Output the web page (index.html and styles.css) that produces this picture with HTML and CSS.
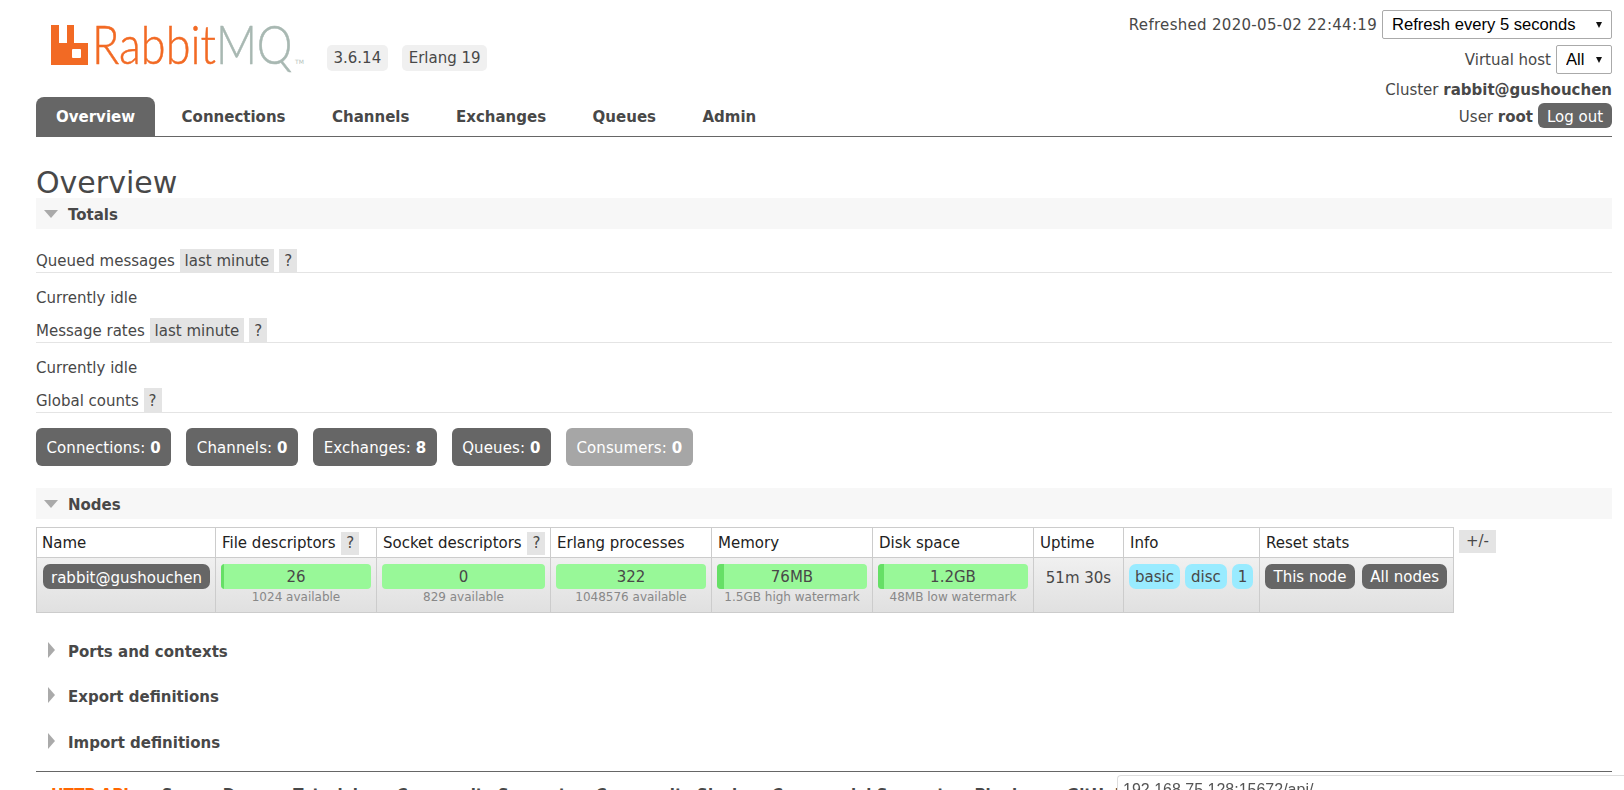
FILE: index.html
```html
<!DOCTYPE html>
<html lang="en">
<head>
    <meta charset="UTF-8">
    <meta name="viewport" content="width=device-width, initial-scale=1.0">
    <title>RabbitMQ Management</title>
    <link rel="stylesheet" href="styles.css">
</head>
<body>
    <div class="header">
        <div class="brand">
            <div class="logo">
                <svg class="logo-icon" width="37" height="40" viewBox="0 0 37 40">
                    <path fill-rule="evenodd" d="M0 0H8V18H16V0H23V18H37V40H0ZM22 24Q21 24 21 25V32Q21 33 22 33H29Q30 33 30 32V25Q30 24 29 24Z"/>
                </svg>
                <span class="logo-word"><span class="logo-rabbit">Rabbit</span><span class="logo-mq">MQ</span></span>
                <span class="logo-tm">TM</span>
            </div>
            <span class="version">3.6.14</span>
            <span class="version">Erlang 19</span>
        </div>
        <div class="login">
            <div class="login-row first">
                <span class="refreshed">Refreshed 2020-05-02 22:44:19</span>
                <span class="select-wrap"><select class="refresh-select"><option>Refresh every 5 seconds</option></select></span>
            </div>
            <div class="login-row vhost">
                <span>Virtual host</span>
                <span class="select-wrap"><select class="vhost-select"><option>All</option></select></span>
            </div>
            <div class="login-row cluster">Cluster&nbsp;<b>rabbit@gushouchen</b></div>
            <div class="login-row user">
                <span>User <b>root</b></span>
                <button class="logout">Log out</button>
            </div>
        </div>
    </div>

    <ul class="tabs">
        <li class="tab active">Overview</li>
        <li class="tab">Connections</li>
        <li class="tab">Channels</li>
        <li class="tab">Exchanges</li>
        <li class="tab">Queues</li>
        <li class="tab">Admin</li>
    </ul>

    <h1>Overview</h1>

    <div class="section-head open"><span class="arrow-down"></span>Totals</div>
    <div class="totals">
        <h3 class="sub-head first-head">Queued messages <span class="tag">last minute</span><span class="help">?</span></h3>
        <p class="idle">Currently idle</p>
        <h3 class="sub-head">Message rates <span class="tag">last minute</span><span class="help">?</span></h3>
        <p class="idle">Currently idle</p>
        <h3 class="sub-head">Global counts <span class="help">?</span></h3>
        <div class="counts">
            <span class="count">Connections: <b>0</b></span>
            <span class="count">Channels: <b>0</b></span>
            <span class="count">Exchanges: <b>8</b></span>
            <span class="count">Queues: <b>0</b></span>
            <span class="count faded">Consumers: <b>0</b></span>
        </div>
    </div>

    <div class="section-head open"><span class="arrow-down"></span>Nodes</div>
    <div class="nodes">
        <table class="node-table">
            <thead>
                <tr>
                    <th class="col-name">Name</th>
                    <th class="col-wide">File descriptors <span class="help">?</span></th>
                    <th class="col-sock">Socket descriptors <span class="help">?</span></th>
                    <th class="col-wide">Erlang processes</th>
                    <th class="col-wide">Memory</th>
                    <th class="col-wide">Disk space</th>
                    <th class="col-up">Uptime</th>
                    <th class="col-info">Info</th>
                    <th class="col-reset">Reset stats</th>
                </tr>
            </thead>
            <tbody>
                <tr>
                    <td><span class="node-name">rabbit@gushouchen</span></td>
                    <td>
                        <div class="bar"><span class="bar-fill" style="width: 3px"></span>26</div>
                        <div class="sub">1024 available</div>
                    </td>
                    <td>
                        <div class="bar">0</div>
                        <div class="sub">829 available</div>
                    </td>
                    <td>
                        <div class="bar">322</div>
                        <div class="sub">1048576 available</div>
                    </td>
                    <td>
                        <div class="bar"><span class="bar-fill" style="width: 7px"></span>76MB</div>
                        <div class="sub">1.5GB high watermark</div>
                    </td>
                    <td>
                        <div class="bar"><span class="bar-fill" style="width: 6px"></span>1.2GB</div>
                        <div class="sub">48MB low watermark</div>
                    </td>
                    <td class="uptime">51m 30s</td>
                    <td class="info"><span class="pill">basic</span><span class="pill">disc</span><span class="pill num">1</span></td>
                    <td class="reset"><span class="reset-btn">This node</span><span class="reset-btn">All nodes</span></td>
                </tr>
            </tbody>
        </table>
        <span class="plus-minus">+/-</span>
    </div>

    <div class="section-head closed first-closed"><span class="arrow-right"></span>Ports and contexts</div>
    <div class="section-head closed"><span class="arrow-right"></span>Export definitions</div>
    <div class="section-head closed"><span class="arrow-right"></span>Import definitions</div>

    <div class="footer">
        <a class="api">HTTP API</a>
        <a>Server Docs</a>
        <a>Tutorials</a>
        <a>Community Support</a>
        <a>Community Slack</a>
        <a>Commercial Support</a>
        <a>Plugins</a>
        <a>GitHub</a>
    </div>

    <div class="status-bubble">192.168.75.128:15672/api/</div>
</body>
</html>
```

FILE: styles.css
```css
html, body {
    height: 790px;
    overflow: hidden;
}

body {
    margin: 0;
    padding: 0 12px 0 36px;
    font-family: "DejaVu Sans", Verdana, sans-serif;
    font-size: 15px;
    color: #484848;
    background-color: #fff;
}

.header {
    display: flex;
    justify-content: space-between;
    height: 97px;
}

.brand {
    display: flex;
    align-items: flex-start;
}

.logo {
    display: flex;
    align-items: flex-start;
    width: 291px;
    margin-top: 25px;
    padding-left: 15px;
    box-sizing: border-box;
    position: relative;
}

.logo-icon {
    fill: #f26a24;
    flex: none;
}

.logo-word {
    margin-left: 4px;
    font-family: Lato, "Open Sans", sans-serif;
    font-weight: 300;
    font-size: 53px;
    line-height: 38px;
    white-space: nowrap;
    -webkit-text-stroke: .5px;
    transform: scaleX(.85);
    transform-origin: left top;
}

.logo-rabbit {
    color: #f26a24;
}

.logo-mq {
    color: #a8b8b2;
}

.logo-tm {
    position: absolute;
    left: 259px;
    top: 33px;
    font-size: 6px;
    color: #b5bfbb;
}

.version {
    margin-top: 45px;
    margin-right: 14.5px;
    padding: 0 6.5px;
    height: 26px;
    line-height: 26px;
    background-color: #f0f0f0;
    border-radius: 5px;
}

.login {
    display: flex;
    flex-direction: column;
    align-items: flex-end;
    padding-top: 10px;
}

.login-row {
    display: flex;
    align-items: center;
    gap: 5px;
    height: 29px;
    margin-bottom: 6px;
    white-space: pre;
}

.login-row.vhost {
    margin-bottom: 7px;
}

.login-row.cluster {
    gap: 0;
    height: 17px;
    margin-bottom: 5px;
}

.login-row.user {
    height: 25px;
    margin-bottom: 0;
}

.login-row.user span {
    padding-top: 2px;
}

.refreshed {
    letter-spacing: .3px;
}

.select-wrap {
    position: relative;
    display: block;
}

.select-wrap::after {
    content: "";
    position: absolute;
    right: 10px;
    top: 12px;
    border-left: 3.5px solid transparent;
    border-right: 3.5px solid transparent;
    border-top: 6px solid #111;
}

select {
    display: block;
    appearance: none;
    height: 29px;
    padding: 0 0 0 9px;
    border: 1px solid #aaa;
    border-radius: 2px;
    background-color: #fff;
    font-family: "Liberation Sans", Arial, sans-serif;
    font-size: 16.6px;
    color: #000;
}

.refresh-select {
    width: 230px;
}

.vhost-select {
    width: 56px;
}

.logout {
    height: 25px;
    width: 74px;
    padding: 2px 0 0;
    border: 0;
    border-radius: 6px;
    background-color: #666;
    color: #fff;
    font-family: inherit;
    font-size: 15px;
}

.tabs {
    display: flex;
    gap: 6.5px;
    height: 39px;
    margin: 0;
    padding: 0;
    list-style: none;
    border-bottom: 1px solid #666;
}

.tab {
    padding: 0 20px;
    line-height: 40px;
    font-weight: bold;
}

.tab.active {
    background-color: #666;
    color: #fff;
    border-radius: 8px 8px 0 0;
}

h1 {
    margin: 30px 0 0;
    font-size: 30px;
    font-weight: normal;
    line-height: 31px;
    height: 31px;
}

.section-head {
    display: flex;
    align-items: center;
    height: 31px;
    padding-top: 2px;
    box-sizing: border-box;
    font-weight: bold;
}

.section-head.open {
    background-color: #f7f7f7;
}

.section-head.closed {
    height: 45.5px;
}

.first-closed {
    margin-top: 15px;
}

.arrow-down {
    width: 0;
    height: 0;
    margin: -1px 10px 0 8px;
    border-left: 7px solid transparent;
    border-right: 7px solid transparent;
    border-top: 8px solid #aaa;
}

.arrow-right {
    width: 0;
    height: 0;
    margin: -4px 13px 0 12px;
    border-top: 8px solid transparent;
    border-bottom: 8px solid transparent;
    border-left: 7px solid #aaa;
}

.totals {
    height: 259px;
    box-sizing: border-box;
    padding-top: 20px;
}

.sub-head {
    display: flex;
    align-items: flex-start;
    height: 24px;
    margin: 0;
    font-size: 15px;
    font-weight: normal;
    line-height: 26px;
    border-bottom: 1px solid #e4e4e4;
    white-space: pre;
}

.first-head {
    height: 23px;
    line-height: 25px;
}

.tag, .help {
    display: block;
    height: 100%;
    background-color: #e4e4e4;
}

.tag {
    padding: 0 5px;
    margin-right: 5px;
}

.help {
    padding: 0 5px;
}

.idle {
    height: 45px;
    margin: 0;
    line-height: 50px;
}

.counts {
    display: flex;
    gap: 15px;
    margin-top: 15px;
}

.count {
    height: 38px;
    padding: 0 10.5px;
    line-height: 40px;
    letter-spacing: .1px;
    background-color: #666;
    color: #fff;
    border-radius: 6px;
}

.count.faded {
    background-color: #a6a6a6;
}

.nodes {
    display: flex;
    align-items: flex-start;
    gap: 5px;
    margin-top: 8px;
}

.node-table {
    table-layout: fixed;
    width: 1417px;
    border-collapse: collapse;
    border: 1px solid #ccc;
}

.node-table th, .node-table td {
    padding: 0;
    border: 1px solid #ccc;
    vertical-align: top;
    text-align: center;
}

.node-table th {
    height: 30px;
    padding: 0 0 0 6px;
    box-sizing: border-box;
    font-weight: normal;
    line-height: 26px;
    color: #222;
    text-align: left;
    vertical-align: middle;
    white-space: pre;
}

.node-table th:first-child {
    padding-left: 5px;
}

.node-table th .help {
    display: inline-block;
    height: 23px;
    line-height: 23px;
    margin-left: 1px;
    color: #484848;
}

.col-name { width: 179px; }
.col-wide { width: 161px; }
.col-sock { width: 174px; }
.col-up { width: 90px; }
.col-info { width: 136px; }
.col-reset { width: 194px; }

.node-table tbody tr {
    height: 55px;
    background: linear-gradient(#f0f0f0, #e0e0e0);
}

.node-table td {
    padding-top: 6px;
}

.node-name {
    display: block;
    height: 25px;
    margin: 0 5px 0 6px;
    line-height: 28px;
    background-color: #666;
    color: #fff;
    border-radius: 7px;
}

.bar {
    position: relative;
    height: 25px;
    margin: 0 5px;
    line-height: 27px;
    background-color: #98f898;
    border-radius: 4px;
    overflow: hidden;
}

.bar-fill {
    position: absolute;
    left: 0;
    top: 0;
    bottom: 0;
    background-color: #66df66;
}

.sub {
    font-size: 12px;
    line-height: 17px;
    color: #888;
}

.uptime {
    line-height: 28px;
}

.info, .reset {
    white-space: nowrap;
}

.node-table .info {
    text-align: left;
    padding-left: 5px;
}

.node-table .reset {
    text-align: left;
    padding-left: 5px;
}

.pill, .reset-btn {
    display: inline-block;
    height: 25px;
    line-height: 27px;
    vertical-align: top;
    border-radius: 7px;
}

.pill {
    margin-right: 5px;
    padding: 0 6px;
    background-color: #99ebff;
}

.pill.num {
    margin-right: 0;
    padding: 0 6px;
}

.reset-btn {
    margin-right: 7px;
    padding: 0 8.5px;
    background-color: #666;
    color: #fff;
}

.plus-minus {
    margin-top: 3px;
    padding: 0 7px;
    height: 23px;
    line-height: 23px;
    background-color: #e4e4e4;
}

.footer {
    display: flex;
    gap: 30px;
    margin-top: 6px;
    padding: 14px 0 0 15px;
    border-top: 1px solid #666;
    font-weight: bold;
    white-space: nowrap;
}

.api {
    margin-right: 3px;
    color: #f60;
}

.status-bubble {
    position: fixed;
    left: 1117px;
    top: 775px;
    right: 0;
    bottom: 0;
    padding: 5px 0 0 5px;
    background-color: #fff;
    border-top: 1px solid #ddd;
    border-left: 1px solid #ddd;
    border-top-left-radius: 4px;
    font-family: "Liberation Sans", Arial, sans-serif;
    font-size: 16px;
    line-height: 18px;
    color: #555;
}
```
